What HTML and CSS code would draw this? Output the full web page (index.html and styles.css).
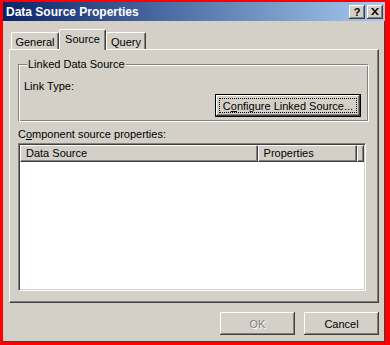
FILE: index.html
```html
<!DOCTYPE html>
<html lang="en">
<head>
    <meta charset="UTF-8">
    <meta name="viewport" content="width=device-width, initial-scale=1.0">
    <title>Data Source Properties</title>
    <link rel="stylesheet" href="styles.css">
</head>
<body>
    <div class="window">
        <div class="titlebar">
            <span class="title">Data Source Properties</span>
            <div class="caption-buttons">
                <button class="caption-btn help">?</button>
                <button class="caption-btn close">
                    <svg width="8" height="7" viewBox="0 0 8 7">
                        <path d="M0 0h2l2 2.5L6 0h2L5 3.5 8 7H6L4 4.5 2 7H0l3-3.5z" fill="#000"/>
                    </svg>
                </button>
            </div>
        </div>

        <div class="content">
            <div class="tabs">
                <div class="tab tab-general">General</div>
                <div class="tab tab-source active">Source</div>
                <div class="tab tab-query">Query</div>
            </div>

            <div class="panel">
                <fieldset class="group">
                    <legend>Linked Data Source</legend>
                    <div class="link-type">Link Type:</div>
                    <div class="group-actions">
                        <button class="btn default">C<u>o</u>nfigure Linked Source...</button>
                    </div>
                </fieldset>

                <div class="list-label">C<u>o</u>mponent source properties:</div>

                <div class="list">
                    <div class="list-header">
                        <div class="col col-source">Data Source</div>
                        <div class="col col-props">Properties</div>
                        <div class="col col-rest"></div>
                    </div>
                    <div class="list-body"></div>
                </div>
            </div>

            <div class="footer">
                <button class="btn" disabled>OK</button>
                <button class="btn">Cancel</button>
            </div>
        </div>
    </div>
</body>
</html>
```

FILE: styles.css
```css
body {
    margin: 0;
    padding: 2px 0 0 3px;
    background-color: #ff0000;
    font-family: "Liberation Sans", Arial, sans-serif;
    font-size: 11px;
    color: #000;
}
.window {
    width: 382px;
    height: 340px;
    background-color: #d4d0c8;
    display: flex;
    flex-direction: column;
    box-shadow: inset -1px -1px #404040;
}
.titlebar {
    height: 19px;
    display: flex;
    align-items: center;
    justify-content: space-between;
    padding: 0 2px 0 3px;
    background: linear-gradient(to right, #0a246a, #a6caf0);
}
.title {
    color: #fff;
    font-weight: bold;
    font-size: 12px;
}
.caption-buttons {
    display: flex;
    gap: 2px;
}
.caption-btn {
    width: 16px;
    height: 14px;
    padding: 0;
    border: none;
    background-color: #d4d0c8;
    box-shadow: inset -1px -1px #404040, inset 1px 1px #fff, inset -2px -2px #808080;
    display: flex;
    align-items: center;
    justify-content: center;
    font-family: "Liberation Sans", Arial, sans-serif;
    font-weight: bold;
    font-size: 11px;
    line-height: 14px;
}
.content {
    flex: 1;
    padding: 8px 6px 0 6px;
    display: flex;
    flex-direction: column;
}
.tabs {
    display: flex;
    align-items: flex-end;
    padding-left: 2px;
    height: 20px;
}
.tab {
    height: 17px;
    box-sizing: border-box;
    padding-top: 3px;
    text-align: center;
    border: 1px solid #fff;
    border-right-color: #404040;
    border-bottom: none;
    border-radius: 2px 2px 0 0;
    box-shadow: inset -1px 0 #808080;
    line-height: 13px;
}
.tab-general {
    width: 48px;
}
.tab-source {
    width: 47px;
}
.tab-query {
    width: 40px;
}
.tab.active {
    height: 21px;
    margin-bottom: -1px;
    padding-top: 3px;
    position: relative;
    z-index: 1;
    background-color: #d4d0c8;
}
.panel {
    width: 370px;
    height: 254px;
    box-sizing: border-box;
    border: 1px solid;
    border-color: #fff #404040 #404040 #fff;
    box-shadow: inset -1px -1px #808080;
    padding: 8px 0 0 8px;
}
.group {
    margin: 0;
    width: 351px;
    box-sizing: border-box;
    padding: 0 7px 4px 5px;
    border: 1px solid;
    border-color: #808080 #fff #fff #808080;
    box-shadow: inset 1px 1px #fff, inset -1px -1px #808080;
}
.group legend {
    padding: 0 1px;
    margin-left: 3px;
    background-color: #d4d0c8;
    line-height: 13px;
}
.link-type {
    line-height: 13px;
    margin-top: 9px;
}
.group-actions {
    display: flex;
    justify-content: flex-end;
    margin-top: 1px;
}
.btn {
    width: 75px;
    height: 23px;
    padding: 0;
    border: none;
    background-color: #d4d0c8;
    box-shadow: inset -1px -1px #404040, inset 1px 1px #fff, inset -2px -2px #808080;
    font-family: "Liberation Sans", Arial, sans-serif;
    font-size: 11px;
    color: #000;
}
.btn.default {
    width: 146px;
    border: 1px solid #000;
    outline: 1px dotted #000;
    outline-offset: -5px;
}
.btn:disabled {
    color: #808080;
    text-shadow: 1px 1px #fff;
}
.list-label {
    margin-top: 6px;
    line-height: 13px;
}
.list {
    margin-top: 2px;
    width: 348px;
    height: 148px;
    box-sizing: border-box;
    border: 1px solid;
    border-color: #808080 #fff #fff #808080;
    box-shadow: inset 1px 1px #404040, inset -1px -1px #d4d0c8;
    padding: 1px;
    background-color: #fff;
    background-clip: padding-box;
}
.list-header {
    display: flex;
    height: 17px;
}
.col {
    box-sizing: border-box;
    height: 17px;
    background-color: #d4d0c8;
    border: 1px solid;
    border-color: #fff #404040 #404040 #fff;
    box-shadow: inset -1px -1px #808080;
    padding: 1px 0 0 5px;
    line-height: 13px;
}
.col-source {
    width: 239px;
}
.col-props {
    width: 100px;
}
.col-rest {
    flex: 1;
}
.footer {
    display: flex;
    justify-content: flex-end;
    gap: 9px;
    margin-top: 9px;
}
```
